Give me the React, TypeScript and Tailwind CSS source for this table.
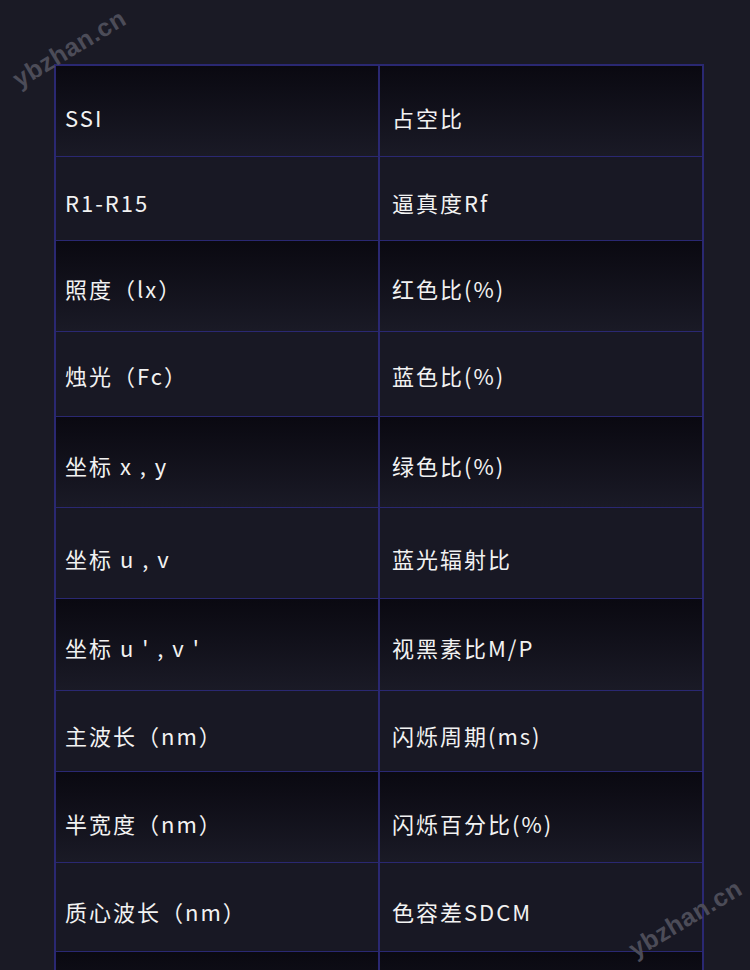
import React from "react";

const rows: { l: string; r: string; cls: string }[] = [
  { l: "SSI", r: "占空比", cls: "h-[90px] pt-[12px]" },
  { l: "R1-R15", r: "逼真度Rf", cls: "h-[83px] pt-[8px]" },
  { l: "照度（lx）", r: "红色比(%)", cls: "h-[90px] pt-[4px]" },
  { l: "烛光（Fc）", r: "蓝色比(%)", cls: "h-[84px] pt-[2px]" },
  { l: "坐标 x , y", r: "绿色比(%)", cls: "h-[90px] pt-[6px]" },
  { l: "坐标 u , v", r: "蓝光辐射比", cls: "h-[90px] pt-[11px]" },
  { l: "坐标 u ' , v '", r: "视黑素比M/P", cls: "h-[91px] pt-[5px]" },
  { l: "主波长（nm）", r: "闪烁周期(ms)", cls: "h-[80px] pt-[8px]" },
  { l: "半宽度（nm）", r: "闪烁百分比(%)", cls: "h-[90px] pt-[12px]" },
  { l: "质心波长（nm）", r: "色容差SDCM", cls: "h-[88px] pt-[8px]" },
  { l: "", r: "", cls: "h-[90px]" },
];

export default function App() {
  return (
    <div className="relative h-[970px] w-[750px] overflow-hidden bg-[#1a1a25] pl-[54px] pt-[64px] font-['Noto_Sans_CJK_SC','Noto_Sans',sans-serif]">
      <div className="w-[650px] border-x-2 border-t-2 border-[#2a2872]">
        {rows.map((row, i) => (
          <div
            key={i}
            className={`grid grid-cols-[324px_1fr] border-b border-[#2a2872] ${
              i % 2 === 0
                ? "bg-gradient-to-b from-[#0a0911] to-[#1a1a26]"
                : "bg-[#181824]"
            }`}
          >
            <div
              className={`flex items-center border-r-2 border-[#2a2872] pl-[9px] text-[22px] tracking-[2px] text-[#f2f2f2] ${row.cls}`}
            >
              {row.l}
            </div>
            <div
              className={`flex items-center pl-[12px] text-[22px] tracking-[2px] text-[#f2f2f2] ${row.cls}`}
            >
              {row.r}
            </div>
          </div>
        ))}
      </div>
      <div className="absolute left-[6px] top-[30px] -rotate-[31deg] font-['Liberation_Sans',Arial,sans-serif] text-[25px] font-bold tracking-[0.5px] text-[#4c4c58]">
        ybzhan.cn
      </div>
      <div className="absolute left-[622px] top-[900px] -rotate-[31deg] font-['Liberation_Sans',Arial,sans-serif] text-[25px] font-bold tracking-[0.5px] text-[#4c4c58]">
        ybzhan.cn
      </div>
    </div>
  );
}
